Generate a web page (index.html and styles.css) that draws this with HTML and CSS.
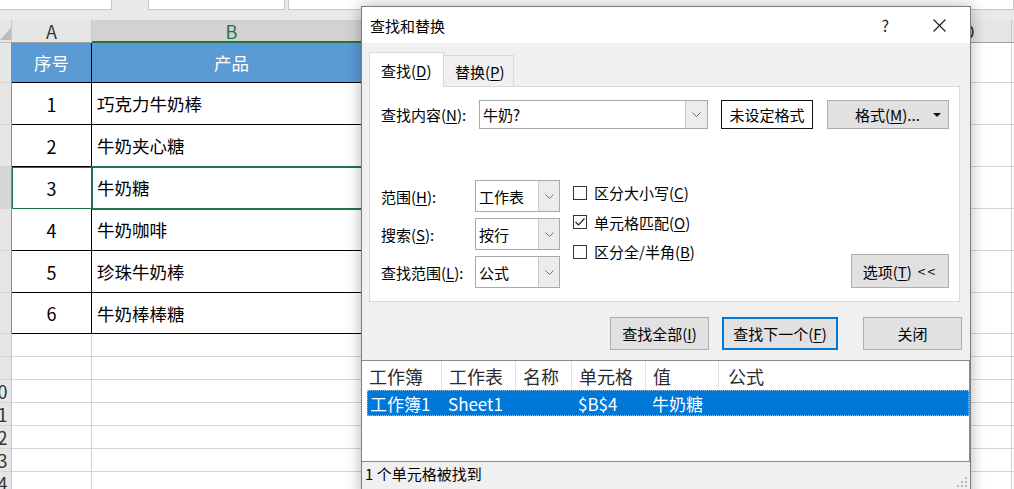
FILE: index.html
```html
<!DOCTYPE html>
<html lang="zh-CN">
    <head>
        <meta charset="utf-8">
        <title>查找和替换</title>
        <link rel="stylesheet" href="styles.css">
    </head>
    <body>
        <!-- Ribbon / formula bar strip -->
        <div class="topbar">
            <div class="box box-name"></div>
            <div class="box box-fx"></div>
            <div class="box box-formula"></div>
        </div>

        <!-- Worksheet -->
        <div class="sheet">
            <div class="row colhead">
                <div class="corner">
                    <svg width="12" height="14" viewBox="0 0 12 14"><polygon points="11,1 11,13 0,13" fill="#bcbcbc"/></svg>
                </div>
                <div class="ch col-a">A</div>
                <div class="ch col-b sel">B</div>
                <div class="ch col-c">C</div>
                <div class="ch col-d">D</div>
                <div class="ch col-e"></div>
            </div>

            <div class="row trow title-row">
                <div class="rh"></div>
                <div class="cell t th col-a">序号</div>
                <div class="cell t th col-b">产品</div>
                <div class="cell col-c"></div>
                <div class="cell col-d"></div>
                <div class="cell col-e"></div>
            </div>
            <div class="row trow data-row">
                <div class="rh"></div>
                <div class="cell t num col-a">1</div>
                <div class="cell t txt col-b">巧克力牛奶棒</div>
                <div class="cell col-c"></div>
                <div class="cell col-d"></div>
                <div class="cell col-e"></div>
            </div>
            <div class="row trow data-row">
                <div class="rh"></div>
                <div class="cell t num col-a">2</div>
                <div class="cell t txt col-b">牛奶夹心糖</div>
                <div class="cell col-c"></div>
                <div class="cell col-d"></div>
                <div class="cell col-e"></div>
            </div>
            <div class="row trow data-row">
                <div class="rh rh-sel"></div>
                <div class="cell t num col-a pick-a">3</div>
                <div class="cell t txt col-b pick-b">牛奶糖</div>
                <div class="cell col-c"></div>
                <div class="cell col-d"></div>
                <div class="cell col-e"></div>
            </div>
            <div class="row trow data-row">
                <div class="rh"></div>
                <div class="cell t num col-a">4</div>
                <div class="cell t txt col-b">牛奶咖啡</div>
                <div class="cell col-c"></div>
                <div class="cell col-d"></div>
                <div class="cell col-e"></div>
            </div>
            <div class="row trow data-row">
                <div class="rh"></div>
                <div class="cell t num col-a">5</div>
                <div class="cell t txt col-b">珍珠牛奶棒</div>
                <div class="cell col-c"></div>
                <div class="cell col-d"></div>
                <div class="cell col-e"></div>
            </div>
            <div class="row trow data-row last">
                <div class="rh"></div>
                <div class="cell t num col-a">6</div>
                <div class="cell t txt col-b">牛奶棒棒糖</div>
                <div class="cell col-c"></div>
                <div class="cell col-d"></div>
                <div class="cell col-e"></div>
            </div>

            <div class="row empty-row">
                <div class="rh"></div>
                <div class="cell col-a"></div><div class="cell col-b"></div><div class="cell col-c"></div><div class="cell col-d"></div><div class="cell col-e"></div>
            </div>
            <div class="row empty-row">
                <div class="rh"></div>
                <div class="cell col-a"></div><div class="cell col-b"></div><div class="cell col-c"></div><div class="cell col-d"></div><div class="cell col-e"></div>
            </div>
            <div class="row empty-row">
                <div class="rh">10</div>
                <div class="cell col-a"></div><div class="cell col-b"></div><div class="cell col-c"></div><div class="cell col-d"></div><div class="cell col-e"></div>
            </div>
            <div class="row empty-row">
                <div class="rh">11</div>
                <div class="cell col-a"></div><div class="cell col-b"></div><div class="cell col-c"></div><div class="cell col-d"></div><div class="cell col-e"></div>
            </div>
            <div class="row empty-row">
                <div class="rh">12</div>
                <div class="cell col-a"></div><div class="cell col-b"></div><div class="cell col-c"></div><div class="cell col-d"></div><div class="cell col-e"></div>
            </div>
            <div class="row empty-row">
                <div class="rh">13</div>
                <div class="cell col-a"></div><div class="cell col-b"></div><div class="cell col-c"></div><div class="cell col-d"></div><div class="cell col-e"></div>
            </div>
            <div class="row empty-row">
                <div class="rh">14</div>
                <div class="cell col-a"></div><div class="cell col-b"></div><div class="cell col-c"></div><div class="cell col-d"></div><div class="cell col-e"></div>
            </div>
        </div>

        <!-- Find and replace dialog -->
        <div class="dialog">
            <div class="dlg-title">
                <span>查找和替换</span>
                <span class="help">?</span>
                <span class="close">
                    <svg width="13" height="13" viewBox="0 0 13 13"><path d="M0.5 0.5L12.5 12.5M12.5 0.5L0.5 12.5" stroke="#1a1a1a" stroke-width="1.1" fill="none"/></svg>
                </span>
            </div>

            <div class="dlg-body">
                <div class="tabs">
                    <div class="tab active">查找(<u>D</u>)</div>
                    <div class="tab">替换(<u>P</u>)</div>
                </div>

                <div class="panel">
                    <div class="find-row">
                        <label class="find-label">查找内容(<u>N</u>):</label>
                        <div class="combo">
                            <span class="combo-text">牛奶?</span>
                            <span class="dd">
                                <svg width="9" height="5" viewBox="0 0 9 5"><polyline points="0.5,0.5 4.5,4.5 8.5,0.5" fill="none" stroke="#707070"/></svg>
                            </span>
                        </div>
                        <div class="fmt-box">未设定格式</div>
                        <div class="fmt-btn">
                            <span>格式(<u>M</u>)...</span>
                            <svg width="8" height="4" viewBox="0 0 8 4"><polygon points="0,0 8,0 4,4" fill="#111"/></svg>
                        </div>
                    </div>

                    <div class="opts">
                        <div class="sel-grid">
                            <label>范围(<u>H</u>):</label>
                            <div class="select">
                                <span class="select-text">工作表</span>
                                <span class="dd">
                                    <svg width="9" height="5" viewBox="0 0 9 5"><polyline points="0.5,0.5 4.5,4.5 8.5,0.5" fill="none" stroke="#707070"/></svg>
                                </span>
                            </div>
                            <label>搜索(<u>S</u>):</label>
                            <div class="select">
                                <span class="select-text">按行</span>
                                <span class="dd">
                                    <svg width="9" height="5" viewBox="0 0 9 5"><polyline points="0.5,0.5 4.5,4.5 8.5,0.5" fill="none" stroke="#707070"/></svg>
                                </span>
                            </div>
                            <label>查找范围(<u>L</u>):</label>
                            <div class="select">
                                <span class="select-text">公式</span>
                                <span class="dd">
                                    <svg width="9" height="5" viewBox="0 0 9 5"><polyline points="0.5,0.5 4.5,4.5 8.5,0.5" fill="none" stroke="#707070"/></svg>
                                </span>
                            </div>
                        </div>

                        <div class="checks">
                            <div class="check">
                                <span class="box"></span>
                                <span>区分大小写(<u>C</u>)</span>
                            </div>
                            <div class="check">
                                <span class="box">
                                    <svg width="12" height="12" viewBox="0 0 12 12"><polyline points="1.5,6 4.5,9 10.5,2.5" fill="none" stroke="#222" stroke-width="1.2"/></svg>
                                </span>
                                <span>单元格匹配(<u>O</u>)</span>
                            </div>
                            <div class="check">
                                <span class="box"></span>
                                <span>区分全/半角(<u>B</u>)</span>
                            </div>
                        </div>

                        <div class="btn opt-btn">选项(<u>T</u>)<span class="chev">&lt;&lt;</span></div>
                    </div>
                </div>

                <div class="actions">
                    <div class="btn btn-all">查找全部(<u>I</u>)</div>
                    <div class="btn btn-next">查找下一个(<u>F</u>)</div>
                    <div class="btn btn-close">关闭</div>
                </div>
            </div>

            <div class="results">
                <div class="res-head">
                    <div class="rc rc-1">工作簿</div>
                    <div class="rc rc-2">工作表</div>
                    <div class="rc rc-3">名称</div>
                    <div class="rc rc-4">单元格</div>
                    <div class="rc rc-5">值</div>
                    <div class="rc rc-6">公式</div>
                </div>
                <div class="res-row">
                    <div class="rv rv-1">工作簿1</div>
                    <div class="rv rv-2">Sheet1</div>
                    <div class="rv rv-3"></div>
                    <div class="rv rv-4">$B$4</div>
                    <div class="rv rv-5">牛奶糖</div>
                    <div class="rv rv-6"></div>
                </div>
            </div>

            <div class="status">
                <span>1 个单元格被找到</span>
                <svg class="grip" width="12" height="12" viewBox="0 0 12 12">
                    <rect x="9" y="1" width="2" height="2" fill="#b5b5b5"/>
                    <rect x="5" y="5" width="2" height="2" fill="#b5b5b5"/>
                    <rect x="9" y="5" width="2" height="2" fill="#b5b5b5"/>
                    <rect x="1" y="9" width="2" height="2" fill="#b5b5b5"/>
                    <rect x="5" y="9" width="2" height="2" fill="#b5b5b5"/>
                    <rect x="9" y="9" width="2" height="2" fill="#b5b5b5"/>
                </svg>
            </div>
        </div>
    </body>
</html>
```

FILE: styles.css
```css
* {
    box-sizing: border-box;
}

body {
    margin: 0;
    width: 1014px;
    height: 489px;
    overflow: hidden;
    position: relative;
    background: #fff;
    font-family: "Noto Sans CJK SC", "Noto Sans", sans-serif;
    color: #000;
}

u {
    text-decoration-thickness: 1px;
    text-underline-offset: 2px;
}

/* Top strip */
.topbar {
    height: 20px;
    background: #e9e9e9;
    display: flex;
    align-items: flex-start;
}

.topbar .box {
    height: 10px;
    background: #fff;
    border: 1px solid #c6c6c6;
    border-top: none;
}

.box-name {
    width: 113px;
    margin-left: -1px;
}

.box-fx {
    width: 137px;
    margin-left: 36px;
}

.box-formula {
    flex: 1;
    margin-left: 3px;
    border-right: none;
}

/* Worksheet */
.row {
    display: flex;
}

.row > div {
    flex: none;
}

.col-a { width: 80px; }
.col-b { width: 280px; }
.col-c { width: 554px; }
.col-d { width: 86px; }
.col-e { width: 80px; }

.colhead {
    height: 23px;
}

.corner {
    width: 12px;
    background: #e6e6e6;
    border-right: 1px solid #c8c8c8;
    border-bottom: 1px solid #bdbdbd;
    padding-top: 7px;
}

.corner svg {
    display: block;
}

.ch {
    background: #e6e6e6;
    border-right: 1px solid #c8c8c8;
    border-bottom: 1px solid #9e9e9e;
    text-align: center;
    font-size: 18px;
    line-height: 22px;
    color: #333;
}

.ch.sel {
    background: #d2d2d2;
    color: #217346;
    border-bottom: 2px solid #217346;
}

.rh {
    width: 28px;
    margin-left: -16px;
    background: #e6e6e6;
    border-right: 1px solid #c8c8c8;
    border-bottom: 1px solid #d4d4d4;
    text-align: center;
    font-size: 18px;
    line-height: 20px;
    color: #333;
    overflow: hidden;
    display: flex;
    align-items: center;
    justify-content: center;
}

.trow .rh {
    border-right-color: #8a8a8a;
}

.rh-sel {
    background: #d6d6d6;
}

.cell {
    border-right: 1px solid #d4d4d4;
    border-bottom: 1px solid #d4d4d4;
    font-size: 17.5px;
    display: flex;
    align-items: center;
}

.cell.t {
    border-color: #000;
}

.th {
    background: #5b9bd5;
    color: #fff;
    justify-content: center;
}

.num {
    justify-content: center;
    font-size: 18px;
}

.txt {
    padding-left: 5px;
}

.title-row {
    height: 40px;
}

.data-row {
    height: 42px;
}

.data-row.last {
    height: 41px;
}

.empty-row {
    height: 23px;
}

.pick-a {
    outline: 1px solid #217346;
    outline-offset: -1px;
}

.pick-b {
    outline: 2px solid #217346;
    outline-offset: -1px;
}

/* Dialog */
.dialog {
    position: absolute;
    left: 361px;
    top: 6px;
    width: 610px;
    height: 492px;
    background: #f0f0f0;
    border: 1px solid #7d7d7d;
    box-shadow: 0 0 14px rgba(0, 0, 0, 0.3);
    display: flex;
    flex-direction: column;
    font-size: 15px;
}

.dlg-title {
    flex: none;
    height: 36px;
    background: #fff;
    display: flex;
    align-items: center;
    padding-left: 8px;
}

.dlg-title .help {
    margin-left: auto;
    margin-right: 44px;
    font-size: 16px;
    color: #222;
}

.dlg-title .close {
    margin-right: 24px;
    display: flex;
}

.dlg-body {
    flex: none;
    padding: 9px 8px 0 7px;
}

/* Tabs */
.tabs {
    display: flex;
    align-items: flex-end;
    height: 35px;
}

.tab {
    height: 32px;
    width: 70px;
    padding-left: 11px;
    border: 1px solid #d9d9d9;
    border-bottom: none;
    border-left: none;
    display: flex;
    align-items: center;
}

.tab.active {
    height: 35px;
    width: 75px;
    border-left: 1px solid #d9d9d9;
    background: #fff;
    position: relative;
    z-index: 1;
}

.panel {
    margin-top: -1px;
    margin-right: 2px;
    height: 216px;
    background: #fff;
    border: 1px solid #d9d9d9;
    padding: 13px 10px 0 11px;
}

/* Find row */
.find-row {
    display: flex;
    align-items: center;
    height: 29px;
}

.find-label {
    width: 98px;
}

.combo,
.select {
    display: flex;
    background: #fff;
    border: 1px solid #a9a9a9;
}

.combo {
    width: 229px;
    height: 29px;
}

.combo-text,
.select-text {
    flex: 1;
    padding-left: 3px;
    display: flex;
    align-items: center;
}

.dd {
    width: 22px;
    border-left: 1px solid #c8c8c8;
    background: #ececec;
    display: flex;
    align-items: center;
    justify-content: center;
}

.fmt-box {
    margin-left: 13px;
    width: 92px;
    height: 29px;
    border: 1px solid #111;
    display: flex;
    align-items: center;
    justify-content: center;
}

.fmt-btn {
    margin-left: 14px;
    width: 122px;
    height: 29px;
    background: #e1e1e1;
    border: 1px solid #adadad;
    display: flex;
    align-items: center;
    padding: 0 7px 0 27px;
}

.fmt-btn svg {
    margin-left: auto;
}

/* Options */
.opts {
    margin-top: 51px;
    height: 108px;
    display: flex;
}

.sel-grid {
    display: grid;
    grid-template-columns: 94px 85px;
    grid-auto-rows: 32px;
    row-gap: 6px;
    align-items: center;
}

.select {
    height: 32px;
}

.select .dd {
    width: 21px;
}

.checks {
    margin-left: 13px;
    margin-top: -2px;
}

.check {
    height: 29.5px;
    display: flex;
    align-items: center;
}

.check .box {
    width: 14px;
    height: 14px;
    border: 1px solid #333;
    background: #fff;
    margin-right: 7px;
    display: flex;
    align-items: center;
    justify-content: center;
}

.btn {
    height: 33px;
    background: #e1e1e1;
    border: 1px solid #adadad;
    display: flex;
    align-items: center;
    justify-content: center;
}

.opt-btn {
    margin-left: auto;
    align-self: flex-end;
    width: 98px;
    height: 34px;
}

.opt-btn .chev {
    margin-left: 6px;
    letter-spacing: 2px;
    font-size: 14px;
}

/* Buttons */
.actions {
    margin-top: 15px;
    display: flex;
    justify-content: flex-end;
}

.btn-all {
    width: 99px;
}

.btn-next {
    width: 116px;
    margin-left: 13px;
    border: 2px solid #0078d7;
}

.btn-close {
    width: 99px;
    margin-left: 25px;
}

/* Results list */
.results {
    flex: none;
    margin-top: 10px;
    height: 102px;
    background: #fff;
    border-top: 1px solid #8a8a8a;
    border-bottom: 1px solid #8a8a8a;
    border-right: 1px solid #8a8a8a;
}

.res-head {
    display: flex;
    height: 29px;
    font-size: 18px;
    color: #2b2b2b;
}

.rc {
    flex: none;
    padding-left: 7px;
    border-right: 1px solid #e3e3e3;
    display: flex;
    align-items: center;
}

.rc-1 { width: 80px; }
.rc-2 { width: 74px; }
.rc-3 { width: 56px; }
.rc-4 { width: 74px; }
.rc-5 { width: 73px; }
.rc-6 { flex: 1; border-right: none; padding-left: 9px; }

.res-row {
    display: flex;
    margin: 0 0 0 5px;
    height: 26px;
    background: #0078d7;
    color: #fff;
    border: 1px dotted #8fc3ef;
    font-size: 17px;
}

.rv {
    flex: none;
    padding-left: 6px;
    display: flex;
    align-items: center;
}

.rv-1 { width: 74px; padding-left: 2px; }
.rv-2 { width: 74px; }
.rv-3 { width: 56px; }
.rv-4 { width: 74px; }
.rv-5 { width: 73px; }
.rv-6 { flex: 1; }

/* Status bar */
.status {
    flex: 1;
    position: relative;
    padding-left: 3px;
    padding-top: 1px;
    font-size: 15px;
    line-height: 22px;
}

.grip {
    position: absolute;
    right: 2px;
    top: 14px;
}
```
